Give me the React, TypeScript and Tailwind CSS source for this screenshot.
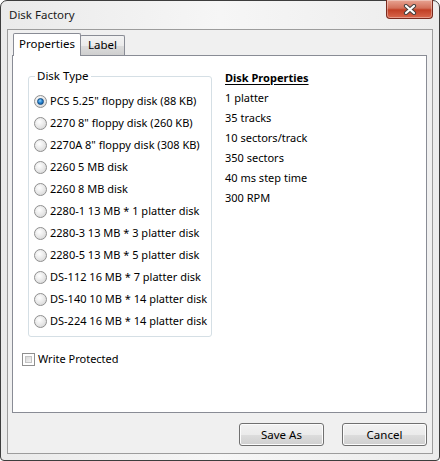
import React from "react";

const disks = [
  'PCS 5.25" floppy disk (88 KB)',
  '2270 8" floppy disk (260 KB)',
  '2270A 8" floppy disk (308 KB)',
  "2260 5 MB disk",
  "2260 8 MB disk",
  "2280-1 13 MB * 1 platter disk",
  "2280-3 13 MB * 3 platter disk",
  "2280-5 13 MB * 5 platter disk",
  "DS-112 16 MB * 7 platter disk",
  "DS-140 10 MB * 14 platter disk",
  "DS-224 16 MB * 14 platter disk",
];

const props = ["1 platter", "35 tracks", "10 sectors/track", "350 sectors", "40 ms step time", "300 RPM"];

function Radio({ checked }: { checked: boolean }) {
  return (
    <span className="w-[13px] h-[13px] rounded-full border border-[#8f8f8f] bg-[radial-gradient(circle_at_40%_35%,#ffffff_0%,#e6e6e6_55%,#cfcfcf_100%)] flex items-center justify-center shrink-0">
      {checked && (
        <span className="w-[7px] h-[7px] rounded-full bg-[radial-gradient(circle_at_40%_35%,#8fd3ff_0%,#2b87d3_45%,#0c4f95_100%)] border border-[#124a80]" />
      )}
    </span>
  );
}

function Button({ label }: { label: string }) {
  return (
    <div className="w-[85px] h-[23px] rounded-[3px] border border-[#707070] bg-[linear-gradient(#f2f2f2_0%,#ebebeb_50%,#dddddd_51%,#cfcfcf_100%)] shadow-[inset_0_0_0_1px_#fcfcfc] flex items-center justify-center text-[11.5px] text-black leading-none">
      {label}
    </div>
  );
}

export default function App() {
  return (
    <div
      className="w-[440px] h-[461px] flex flex-col border border-[#3d3d3d] rounded-t-[7px] rounded-b-[4px] bg-[linear-gradient(90deg,#eaeaea_0%,#f6f6f6_50%,#ececec_100%)] text-black"
      style={{ fontFamily: '"Noto Sans", "Open Sans", sans-serif' }}
    >
      <div className="h-[28px] flex items-start shrink-0">
        <div className="pl-[8px] pt-[6px] text-[11.5px] leading-[16px] text-[#1a1a1a]">Disk Factory</div>
        <div className="ml-auto mr-[6px] w-[47px] h-[19px] -mt-px rounded-b-[4px] border border-[#7a2a1e] border-t-0 bg-[linear-gradient(#e8a493_0%,#d3705a_45%,#c13f25_55%,#d9684d_100%)] shadow-[inset_0_0_0_1px_rgba(255,255,255,0.35)] flex items-center justify-center">
          <svg width="14" height="11" viewBox="0 0 14 11">
            <path d="M3 2 L11 9 M11 2 L3 9" stroke="#44403f" strokeWidth="4.2" strokeLinecap="round" />
            <path d="M3 2 L11 9 M11 2 L3 9" stroke="#ffffff" strokeWidth="2.2" strokeLinecap="round" />
          </svg>
        </div>
      </div>
      <div className="mx-[6px] mb-[6px] flex-1 border border-[#9c9c9c] bg-[#f0f0f0] flex flex-col">
        <div className="pt-[3px] pl-[5px] flex items-end h-[26px] relative z-10">
          <div className="w-[68px] h-[23px] bg-white border border-[#898c95] border-b-0 rounded-t-[2px] flex justify-center pt-[2px] text-[11.5px] leading-[16px]">
            Properties
          </div>
          <div className="-ml-px w-[45px] h-[20px] mb-px border border-[#898c95] border-b-0 rounded-t-[2px] bg-[linear-gradient(#f3f3f3_0%,#ebebeb_50%,#dddddd_51%,#cfcfcf_100%)] flex justify-center pt-[1px] text-[11.5px] leading-[16px]">
            Label
          </div>
        </div>
        <div className="ml-[4px] mr-[5px] h-[358px] -mt-px border border-[#898c95] bg-white flex flex-col">
          <div className="flex">
            <fieldset className="ml-[15px] mt-[12px] w-[184px] min-w-0 h-[269px] border border-[#d5dfe5] rounded-[3px] pl-[5px] shrink-0">
              <legend className="ml-[1px] px-[2px] text-[11.5px] leading-[16px]">Disk Type</legend>
              <div className="flex flex-col pt-[6px]">
                {disks.map((d, i) => (
                  <div key={d} className="h-[22px] flex items-center">
                    <Radio checked={i === 0} />
                    <span className="ml-[3px] text-[11px] leading-[16px] whitespace-nowrap">{d}</span>
                  </div>
                ))}
              </div>
            </fieldset>
            <div className="ml-[13px] mt-[12px] flex flex-col text-[11px] leading-[20px]">
              <div className="font-bold underline underline-offset-2">Disk Properties</div>
              {props.map((p) => (
                <div key={p}>{p}</div>
              ))}
            </div>
          </div>
          <div className="ml-[9px] mt-[14px] flex items-center h-[16px]">
            <span className="w-[13px] h-[13px] border border-[#8f8f8f] bg-white p-[2px] shrink-0">
              <span className="block w-full h-full border border-[#c4c4c4] bg-[linear-gradient(135deg,#d8d8d8_0%,#f4f4f4_100%)]" />
            </span>
            <span className="ml-[3px] text-[11px] leading-[16px]">Write Protected</span>
          </div>
        </div>
        <div className="mt-[10px] mr-[5px] flex justify-end gap-[18px]">
          <Button label="Save As" />
          <Button label="Cancel" />
        </div>
      </div>
    </div>
  );
}
